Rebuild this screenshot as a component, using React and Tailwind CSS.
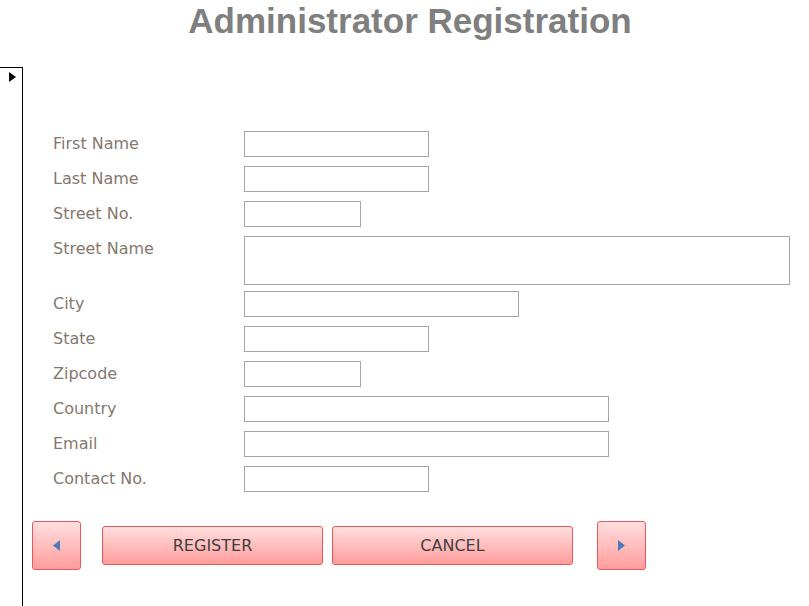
import React from 'react';

const fields = [
    { label: 'First Name', width: 'w-[185px]' },
    { label: 'Last Name', width: 'w-[185px]' },
    { label: 'Street No.', width: 'w-[117px]' },
    { label: 'Street Name', width: 'w-[546px]', tall: true },
    { label: 'City', width: 'w-[275px]' },
    { label: 'State', width: 'w-[185px]' },
    { label: 'Zipcode', width: 'w-[117px]' },
    { label: 'Country', width: 'w-[365px]' },
    { label: 'Email', width: 'w-[365px]' },
    { label: 'Contact No.', width: 'w-[185px]' },
];

const NavButton = ({ dir }) => (
    <button className="flex h-[49px] w-[49px] items-center justify-center rounded-[3px] border border-[#e8585a] bg-gradient-to-b from-[#ffdede] to-[#ff9c9c]">
        <svg width="7" height="11" viewBox="0 0 7 11">
            {dir === 'prev'
                ? <polygon points="7,0 7,11 0,5.5" fill="#4a7dba" />
                : <polygon points="0,0 0,11 7,5.5" fill="#4a7dba" />}
        </svg>
    </button>
);

const ActionButton = ({ children, width }) => (
    <button className={`flex h-[39px] ${width} items-center justify-center rounded-[3px] border border-[#e8585a] bg-gradient-to-b from-[#ffdede] to-[#ff9c9c] text-[16px] text-[#3f3f3f]`}>
        {children}
    </button>
);

const App = () => {
    return (
        <div className="h-[606px] w-[809px] overflow-hidden bg-white" style={{ fontFamily: '"DejaVu Sans", sans-serif' }}>
            <div className="h-[67px] pl-[11px] pt-[3px] text-center">
                <h1 className="text-[35px] font-bold leading-[36px] text-[#7f7f7f]" style={{ fontFamily: '"Liberation Sans", Arial, sans-serif' }}>
                    Administrator Registration
                </h1>
            </div>

            <div className="flex h-[539px]">
                {/* record selector */}
                <div className="w-[23px] shrink-0 border-t border-r border-black pl-[9px] pt-[4px]">
                    <svg width="7" height="10" viewBox="0 0 7 10">
                        <polygon points="0,0 7,5 0,10" fill="#000" />
                    </svg>
                </div>

                <div className="flex-1 pt-[64px]">
                    <div className="flex flex-col pl-[30px]">
                        {fields.map((f, i) => (
                            <div
                                key={f.label}
                                className={`flex ${i === 0 ? '' : fields[i - 1].tall ? 'mt-[6px]' : 'mt-[9px]'}`}
                            >
                                <div className="w-[191px] shrink-0 pt-[3px] text-[16px] leading-5 text-[#85786e]">
                                    {f.label}
                                </div>
                                <div className={`${f.width} ${f.tall ? 'h-[49px]' : 'h-[26px]'} border border-[#a6a6a6] bg-white`} />
                            </div>
                        ))}
                    </div>

                    <div className="mt-[29px] flex items-center pl-[9px]">
                        <NavButton dir="prev" />
                        <div className="ml-[21px]">
                            <ActionButton width="w-[221px]">REGISTER</ActionButton>
                        </div>
                        <div className="ml-[9px]">
                            <ActionButton width="w-[241px]">CANCEL</ActionButton>
                        </div>
                        <div className="ml-[24px]">
                            <NavButton dir="next" />
                        </div>
                    </div>
                </div>
            </div>
        </div>
    );
};

export default App;
